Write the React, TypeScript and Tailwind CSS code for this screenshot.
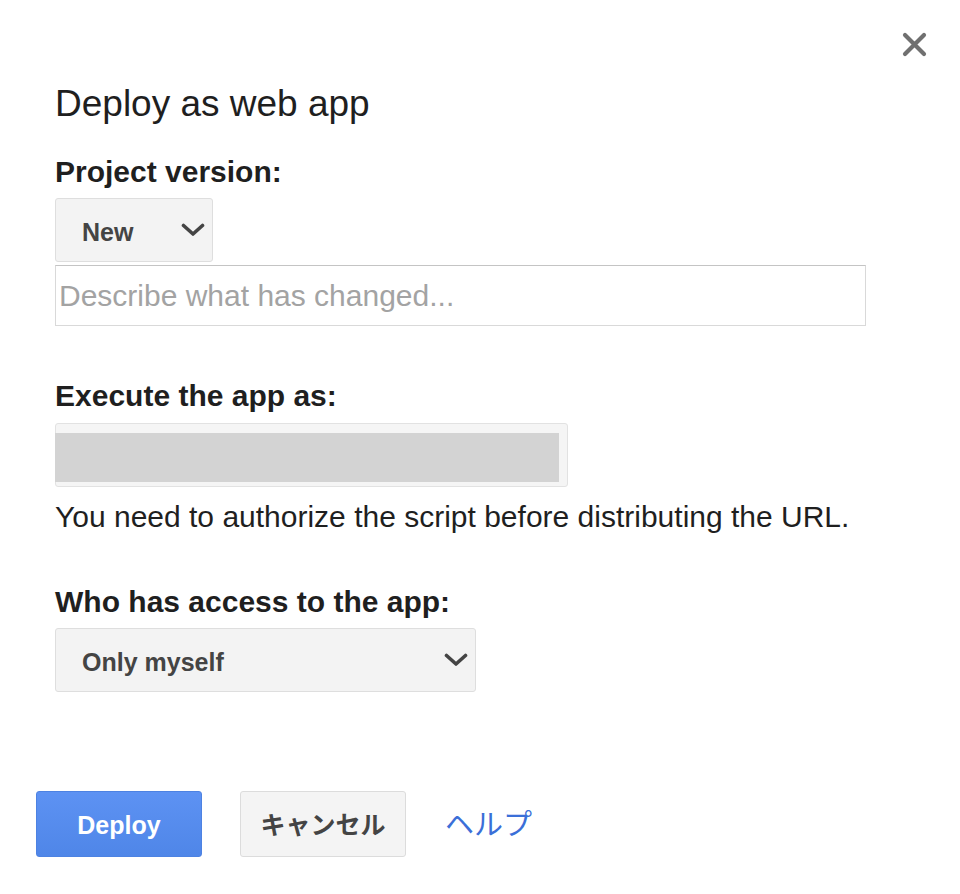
import React from "react";

const FONT = { fontFamily: '"Liberation Sans", Arial, "Noto Sans CJK JP", sans-serif' };

function Chevron() {
  return (
    <svg width="24" height="14" viewBox="0 0 24 14" className="shrink-0">
      <path d="M2.5 2.5 L12 11 L21.5 2.5" fill="none" stroke="#444" strokeWidth="3.6" strokeLinecap="round" strokeLinejoin="round" />
    </svg>
  );
}

function Select({ label, width }: { label: string; width: string }) {
  return (
    <div
      className={`${width} h-[64px] flex items-center justify-between pl-[26px] pr-[7px] bg-[#f3f3f3] border border-[#dedede] rounded-[3px] text-[25px] font-bold text-[#444]`}
    >
      <span className="leading-[25px] pt-[4px]">{label}</span>
      <Chevron />
    </div>
  );
}

export default function App() {
  return (
    <div className="min-h-[894px] w-[960px] bg-white text-[#1f1f1f]" style={FONT}>
      <div className="flex justify-end pt-[32px] pr-[33px]">
        <svg width="25" height="25" viewBox="0 0 25 25">
          <path d="M3 3 L22 22 M22 3 L3 22" stroke="#707070" strokeWidth="4.2" strokeLinecap="round" />
        </svg>
      </div>

      <div className="pl-[55px] flex flex-col">
        <div className="mt-[28px] text-[37px] leading-[37px]">Deploy as web app</div>

        <div className="mt-[35px] text-[30px] leading-[30px] font-bold">Project version:</div>
        <div className="mt-[11px]">
          <Select label="New" width="w-[158px]" />
        </div>
        <div className="mt-[3px] w-[811px] h-[61px] border border-[#d9d9d9] border-t-[#c4c4c4] flex items-center pl-[3px] text-[30px] text-[#a3a3a3]">
          <span className="leading-[30px] pt-[1px]">Describe what has changed...</span>
        </div>

        <div className="mt-[55px] text-[30px] leading-[30px] font-bold">Execute the app as:</div>
        <div className="mt-[12px] w-[513px] h-[64px] bg-[#f5f5f5] border border-[#e2e2e2] rounded-[3px]">
          <div className="ml-[-1px] mt-[9px] mr-[8px] h-[49px] bg-[#d3d3d3]" />
        </div>
        <div className="mt-[15px] text-[30px] leading-[30px]">
          You need to authorize the script before distributing the URL.
        </div>

        <div className="mt-[55px] text-[30px] leading-[30px] font-bold">Who has access to the app:</div>
        <div className="mt-[11px]">
          <Select label="Only myself" width="w-[421px]" />
        </div>
      </div>

      <div className="pl-[36px] mt-[99px] flex items-center">
        <button className="w-[166px] h-[66px] pt-[3px] rounded-[3px] bg-gradient-to-b from-[#5d92f3] to-[#4f86e8] border border-[#4d82e2] text-white text-[25px] font-bold">
          Deploy
        </button>
        <button className="ml-[38px] w-[166px] h-[66px] pt-[3px] rounded-[3px] bg-[#f4f4f4] border border-[#dcdcdc] text-[#444] text-[25px] font-bold">
          キャンセル
        </button>
        <span className="ml-[39px] pt-[3px] text-[29px] text-[#3b6fd8]">ヘルプ</span>
      </div>
    </div>
  );
}
